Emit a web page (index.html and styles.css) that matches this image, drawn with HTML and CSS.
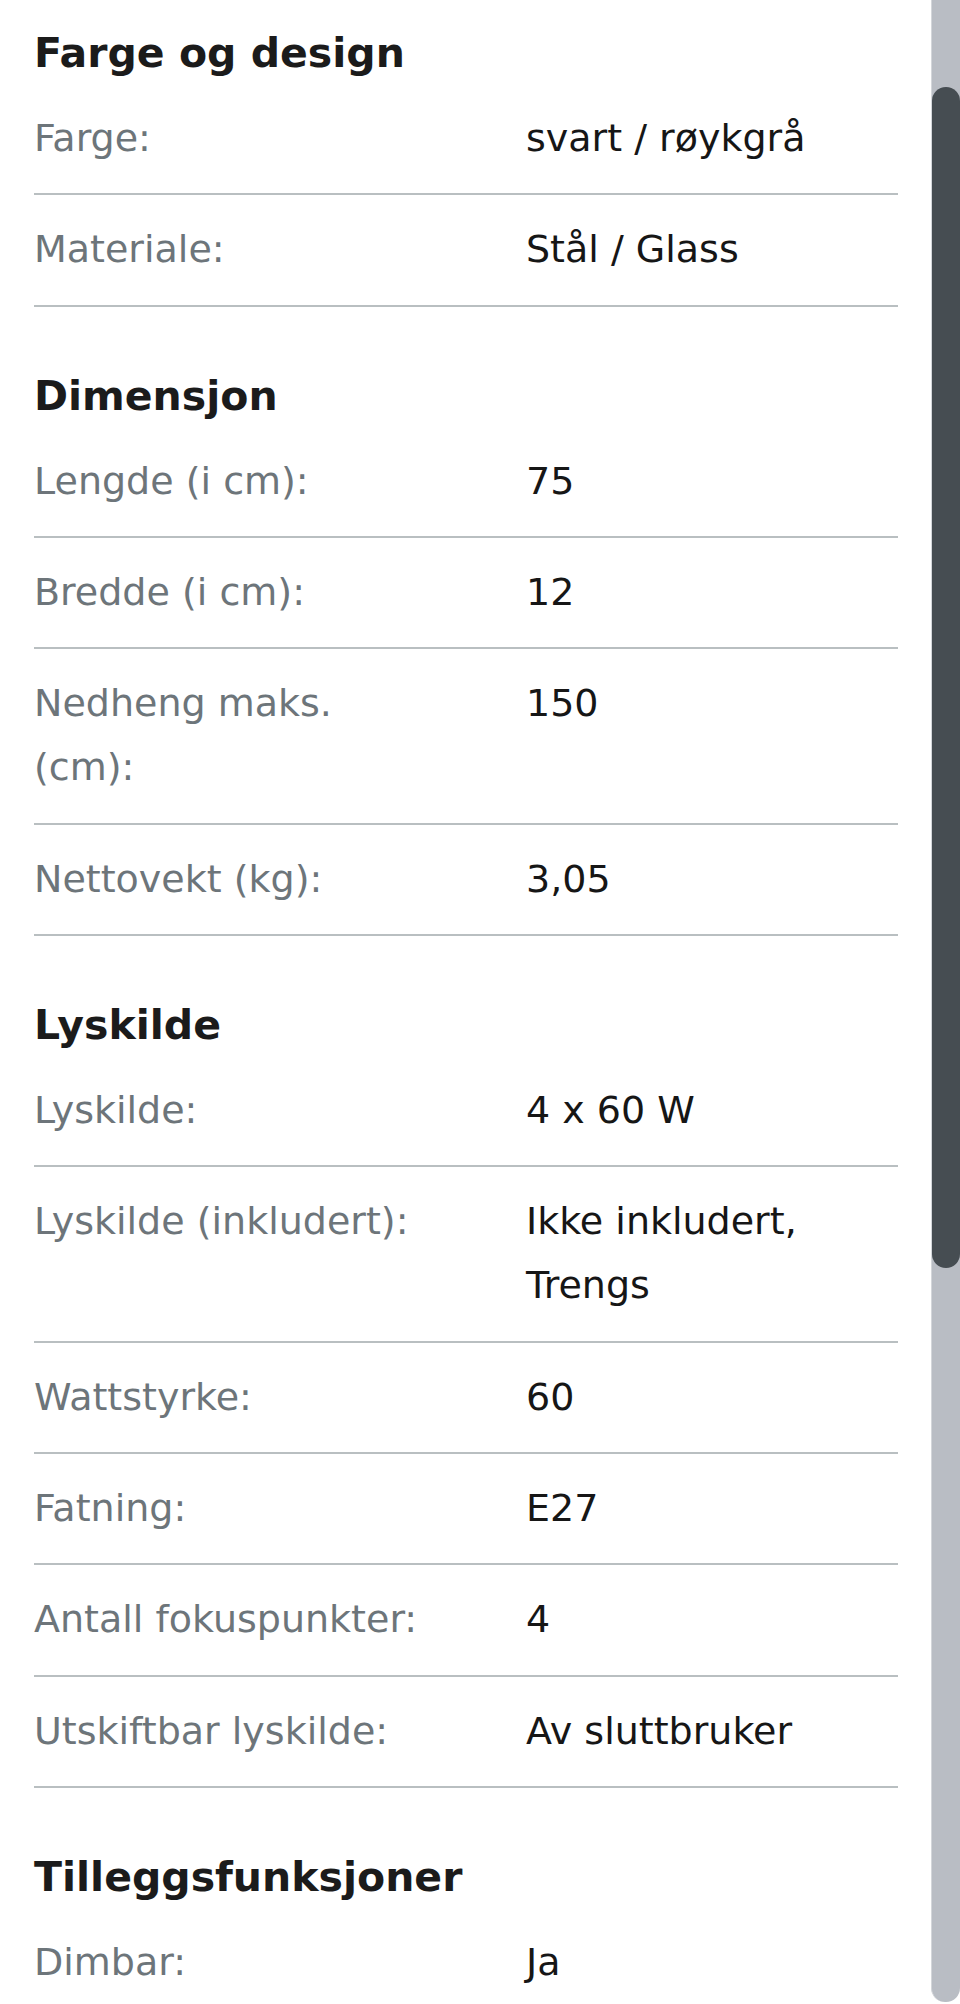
FILE: index.html
```html
<!DOCTYPE html>
<html lang="no">
<head>
<meta charset="utf-8">
<title>Spesifikasjoner</title>
<link rel="stylesheet" href="styles.css">
</head>
<body>
<main class="specs">
  <section class="group">
    <h2 class="group-title">Farge og design</h2>
    <dl class="rows">
      <div class="row"><dt>Farge:</dt><dd>svart / røykgrå</dd></div>
      <div class="row"><dt>Materiale:</dt><dd>Stål / Glass</dd></div>
    </dl>
  </section>
  <section class="group">
    <h2 class="group-title">Dimensjon</h2>
    <dl class="rows">
      <div class="row"><dt>Lengde (i cm):</dt><dd>75</dd></div>
      <div class="row"><dt>Bredde (i cm):</dt><dd>12</dd></div>
      <div class="row"><dt>Nedheng maks. (cm):</dt><dd>150</dd></div>
      <div class="row"><dt>Nettovekt (kg):</dt><dd>3,05</dd></div>
    </dl>
  </section>
  <section class="group">
    <h2 class="group-title">Lyskilde</h2>
    <dl class="rows">
      <div class="row"><dt>Lyskilde:</dt><dd>4 x 60 W</dd></div>
      <div class="row"><dt>Lyskilde (inkludert):</dt><dd>Ikke inkludert, Trengs</dd></div>
      <div class="row"><dt>Wattstyrke:</dt><dd>60</dd></div>
      <div class="row"><dt>Fatning:</dt><dd>E27</dd></div>
      <div class="row"><dt>Antall fokuspunkter:</dt><dd>4</dd></div>
      <div class="row"><dt>Utskiftbar lyskilde:</dt><dd>Av sluttbruker</dd></div>
    </dl>
  </section>
  <section class="group">
    <h2 class="group-title">Tilleggsfunksjoner</h2>
    <dl class="rows">
      <div class="row"><dt>Dimbar:</dt><dd>Ja</dd></div>
    </dl>
  </section>
</main>
<div class="scrollbar" aria-hidden="true"><div class="scrollbar-thumb"></div></div>
</body>
</html>
```

FILE: styles.css
```css
html, body {
  margin: 0;
  padding: 0;
  background: #ffffff;
}

body {
  overflow: hidden;
  height: 2004px;
  font-family: "DejaVu Sans", "Liberation Sans", sans-serif;
}

.specs {
  padding: 22px 62px 0 34px;
}

.group + .group {
  margin-top: 58px;
}

.group-title {
  margin: 0;
  font-size: 41px;
  line-height: 62px;
  font-weight: 700;
  color: #1b1b1b;
}

.rows {
  margin: 0;
}

.row {
  display: grid;
  grid-template-columns: 398px 1fr;
  column-gap: 94px;
  padding: 22px 0 23.35px;
  border-bottom: 2px solid #b9bfc1;
}

.row dt,
.row dd {
  margin: 0;
  font-size: 38px;
  line-height: 64px;
  font-weight: 400;
}

.row dt {
  color: #6d757a;
}

.row dd {
  color: #161616;
}

.scrollbar {
  position: fixed;
  top: 0;
  right: 0;
  width: 28px;
  height: 2002px;
  background: #b9bdc4;
  border-left: 1px solid #d3d6da;
  border-radius: 0 0 14px 14px;
}

.scrollbar-thumb {
  position: absolute;
  top: 87px;
  left: 0;
  right: 0;
  height: 1181px;
  background: #464d52;
  border-radius: 14px;
}
```
